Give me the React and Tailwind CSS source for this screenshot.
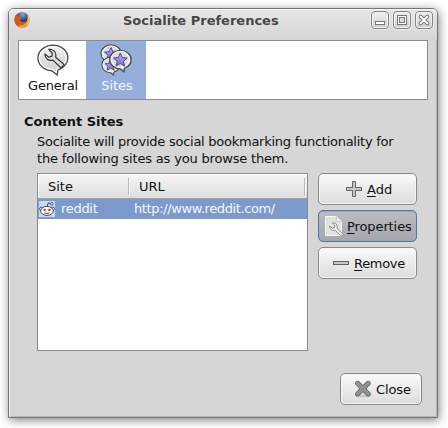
import React from 'react';

const STAR = 'M0 -5.6 L1.6 -1.9 L5.5 -1.6 L2.5 1 L3.5 4.9 L0 2.8 L-3.5 4.9 L-2.5 1 L-5.5 -1.6 L-1.6 -1.9 Z';

function FirefoxIcon() {
  return (
    <svg width="16" height="16" viewBox="0 0 16 16">
      <defs>
        <linearGradient id="fox" x1="0" y1="0" x2="1" y2="1">
          <stop offset="0" stopColor="#a93c1c" />
          <stop offset="0.5" stopColor="#d8581c" />
          <stop offset="1" stopColor="#e88a28" />
        </linearGradient>
        <radialGradient id="globe" cx="0.5" cy="0.15" r="0.8">
          <stop offset="0" stopColor="#7fb0dc" />
          <stop offset="0.6" stopColor="#2a5c9e" />
          <stop offset="1" stopColor="#152c5c" />
        </radialGradient>
      </defs>
      <circle cx="8" cy="8" r="7.7" fill="url(#fox)" />
      <circle cx="8.6" cy="5.8" r="5.3" fill="url(#globe)" />
      <path d="M1 4 L2.6 2.2 L3.2 4 C5 3.8 6 5 8 5.5 C8.4 6.8 6.3 7 6.5 8 C7 10 9 10.6 11.4 9 C10.5 13 5 13.4 2 10 Z" fill="#d05a1c" />
      <path d="M13.6 3.2 C16 6 15.6 11 12.4 13.6 C9 16 5.6 15.4 3.6 13.6 C8 14.4 11.6 12.4 13 9 C13.6 7 13.9 5 13.6 3.2 Z" fill="#f2a030" />
      <path d="M14.3 4.5 C15.6 7 15 11 12.5 13" fill="none" stroke="#fbd65a" strokeWidth="1" />
    </svg>
  );
}

function WrenchBubble() {
  return (
    <svg width="32" height="32" viewBox="0 0 32 32">
      <defs>
        <linearGradient id="bub" x1="0" y1="0" x2="0" y2="1">
          <stop offset="0" stopColor="#f0f0f0" />
          <stop offset="1" stopColor="#cdcfcb" />
        </linearGradient>
      </defs>
      <path d="M16 1.2 C24.2 1.2 30.8 6.8 30.8 13.9 C30.8 19.4 26.4 24 20.9 25.9 L20.2 31 L14.8 26.7 C7 26.2 1 20.8 1 13.9 C1 6.8 7.8 1.2 16 1.2 Z" fill="url(#bub)" stroke="#4c4e4b" strokeWidth="1.4" />
      <path d="M16 2.6 C23.4 2.6 29.4 7.4 29.4 13.9 C29.4 19 25 23.2 19.8 24.8 L19.3 28.5 L15.2 25.2 C8 25 2.4 20.2 2.4 13.9 C2.4 7.4 8.6 2.6 16 2.6 Z" fill="none" stroke="#fff" strokeWidth="1.1" />
      <path d="M11.8 5.3 C15.6 4.8 18.9 7.4 18.9 11 L18.7 13.2 L27 20.4 C26.4 22 25.2 23.2 23.8 23.8 L15.9 16.1 C11.8 17.2 8 15 7.8 10 L12 13.2 L15 12.1 L15.2 9 Z" fill="#dcdddb" stroke="#353735" strokeWidth="1.2" strokeLinejoin="round" />
    </svg>
  );
}

function Bubble({ transform }) {
  return (
    <g transform={transform}>
      <path d="M0 -9.6 C6 -9.6 10.8 -5.7 10.8 -0.5 C10.8 3.8 7.8 6.9 4.2 8.2 L3.6 11.8 L-0.4 8.8 C-6.2 8.7 -10.6 4.8 -10.6 -0.5 C-10.6 -5.7 -6 -9.6 0 -9.6 Z" fill="#dedfe1" stroke="#4b4d55" strokeWidth="1.4" />
      <ellipse cx="0" cy="-0.5" rx="9.2" ry="8.1" fill="none" stroke="#fff" strokeWidth="1" />
      <path d={STAR} transform="scale(1.25)" fill="url(#star)" stroke="#4a4688" strokeWidth="0.8" strokeLinejoin="round" />
    </g>
  );
}

function StarBubbles() {
  return (
    <svg width="32" height="32" viewBox="0 0 32 32">
      <defs>
        <linearGradient id="star" x1="0" y1="0" x2="0" y2="1">
          <stop offset="0" stopColor="#b9b0f6" />
          <stop offset="1" stopColor="#7a6fd6" />
        </linearGradient>
      </defs>
      <Bubble transform="translate(11 10) scale(0.94)" />
      <Bubble transform="translate(10.6 21.3) scale(0.82)" />
      <Bubble transform="translate(20.3 16)" />
    </svg>
  );
}

function RedditIcon() {
  return (
    <svg width="16" height="16" viewBox="0 0 16 16" className="shrink-0">
      <rect width="16" height="16" fill="#c4def8" />
      <path d="M8 6 L9.2 2 L12 2.6" fill="none" stroke="#444" strokeWidth="1" />
      <circle cx="12.8" cy="2.8" r="1.4" fill="#eee" stroke="#444" strokeWidth="0.9" />
      <circle cx="2.2" cy="7.8" r="1.6" fill="#fff" stroke="#444" strokeWidth="0.9" />
      <circle cx="13.8" cy="7.8" r="1.6" fill="#fff" stroke="#444" strokeWidth="0.9" />
      <ellipse cx="8" cy="9.9" rx="6.3" ry="4.5" fill="#fff" stroke="#444" strokeWidth="1" />
      <circle cx="5.6" cy="9" r="1.25" fill="#f02c1c" />
      <circle cx="10.4" cy="9" r="1.25" fill="#f02c1c" />
      <path d="M5.2 11.8 Q8 13.6 10.8 11.8" fill="none" stroke="#444" strokeWidth="0.9" />
    </svg>
  );
}

function PlusIcon() {
  return (
    <svg width="16" height="16" viewBox="0 0 16 16">
      <path d="M6.5 0.5 H9.5 V6.5 H15.5 V9.5 H9.5 V15.5 H6.5 V9.5 H0.5 V6.5 H6.5 Z" fill="#c8c9c5" stroke="#62645f" />
    </svg>
  );
}

function MinusIcon() {
  return (
    <svg width="16" height="16" viewBox="0 0 16 16">
      <rect x="0.5" y="6.5" width="15" height="3" fill="#c8c9c5" stroke="#62645f" />
    </svg>
  );
}

function PropertiesIcon() {
  return (
    <svg width="20" height="22" viewBox="0 0 20 22">
      <path d="M1.5 1.5 H12.5 L17.5 6.5 V20.5 H1.5 Z" fill="#e2e2e0" stroke="#f7f7f7" />
      <path d="M12 1.5 Q13.3 4 12.4 6.6 Q15.5 5.6 17.5 7 Z" fill="#fafafa" stroke="#b4b4b2" strokeWidth="0.6" />
      <path d="M8.4 8 C11 7.4 13.5 9.2 13.3 12.1 L13 13.2 L19.3 19.6 L17.6 21.3 L11.2 15.3 C8.6 16 6 14.8 5.6 11.2 L8.6 13.2 L10.8 12.4 L10.7 10.2 Z" fill="#f1f1ef" stroke="#80827d" strokeWidth="0.9" strokeLinejoin="round" />
    </svg>
  );
}

function CloseIcon() {
  return (
    <svg width="18" height="18" viewBox="0 0 18 18">
      <ellipse cx="9" cy="16" rx="8" ry="1.5" fill="#c9c9c9" />
      <path d="M3.6 3.3 L14.2 13.9 M14.2 3.3 L3.6 13.9" stroke="#5f5f5d" strokeWidth="5" strokeLinecap="round" />
      <path d="M3.6 3.3 L14.2 13.9 M14.2 3.3 L3.6 13.9" stroke="#a2a29f" strokeWidth="3.2" strokeLinecap="round" />
      <path d="M3.6 3.3 L14.2 13.9 M14.2 3.3 L3.6 13.9" stroke="#8b8b89" strokeWidth="1.6" strokeLinecap="round" />
    </svg>
  );
}

function WindowButton({ children }) {
  return (
    <div className="h-[18px] w-[18px] rounded-[4px] border border-[#858585] bg-gradient-to-b from-[#efefef] to-[#cfcfcf] shadow-[0_0_0_1px_#ebebeb,inset_0_0_0_1px_#f3f3f3]">
      <svg width="16" height="16" viewBox="0 0 16 16" className="block">{children}</svg>
    </div>
  );
}

const NORMAL = 'border-[#888a88] bg-gradient-to-b from-[#fafafa] to-[#dcdcdc] shadow-[inset_0_0_0_1px_#f5f5f5]';
const PRESSED = 'border-[#5674a6] bg-gradient-to-b from-[#babdc4] to-[#a3a6ad] shadow-[inset_0_1px_1px_#9da3b0]';

function Button({ icon, children, pressed = false, className = '' }) {
  return (
    <button className={`flex h-8 shrink-0 items-center rounded-[5px] border whitespace-nowrap ${pressed ? PRESSED : NORMAL} ${className}`}>
      {icon}
      <span>{children}</span>
    </button>
  );
}

function Key({ children }) {
  return <span className="underline decoration-1 underline-offset-2">{children}</span>;
}

export default function App() {
  return (
    <div className="h-[428px] w-[448px] overflow-hidden bg-white pt-2 pl-2 font-['DejaVu_Sans',sans-serif] text-[13px] leading-[17px] text-[#111]">
      <div className="flex h-[410px] w-[430px] flex-col rounded-t-[6px] border border-[#757575] bg-[#d6d6d6] shadow-[inset_1px_1px_0_#f4f4f4,inset_-1px_-1px_0_#b8b8b8,1px_2px_10px_rgba(0,0,0,0.5)]">
        <header className="flex h-[31px] shrink-0 rounded-t-[5px] bg-gradient-to-b from-[#e6e6e6] to-[#d6d6d6] pr-1 pl-[5px] shadow-[inset_0_1px_0_#f8f8f8]">
          <div className="pt-[3px]"><FirefoxIcon /></div>
          <h1 className="ml-[93px] flex-1 pt-[3px] font-bold whitespace-nowrap text-[#474747]">Socialite Preferences</h1>
          <div className="flex gap-1 pt-0.5">
            <WindowButton>
              <rect x="3.5" y="9.5" width="9" height="3" fill="#fff" stroke="#777" />
            </WindowButton>
            <WindowButton>
              <rect x="3.5" y="3.5" width="9" height="9" fill="#fff" stroke="#777" />
              <rect x="5.5" y="5.5" width="5" height="5" fill="#ddd" stroke="#777" />
            </WindowButton>
            <WindowButton>
              <path d="M4.6 4.6 L11.4 11.4 M11.4 4.6 L4.6 11.4" stroke="#777" strokeWidth="4" strokeLinecap="round" />
              <path d="M4.6 4.6 L11.4 11.4 M11.4 4.6 L4.6 11.4" stroke="#fff" strokeWidth="2" strokeLinecap="round" />
            </WindowButton>
          </div>
        </header>

        <nav className="mx-[9px] flex h-[60px] shrink-0 border border-[#8c8c8c] bg-white">
          <div className="flex w-[67px] flex-col items-center pt-[3px]">
            <WrenchBubble />
            <span className="mt-px pl-px tracking-[-0.2px]">General</span>
          </div>
          <div className="flex w-[60px] flex-col items-center bg-[#95afda] pt-[3px] text-[#f2f5fa]">
            <StarBubbles />
            <span className="mt-px pl-0.5">Sites</span>
          </div>
        </nav>

        <main className="flex flex-1 flex-col">
          <h2 className="mt-[13px] ml-[15px] font-bold">Content Sites</h2>
          <p className="mt-[3px] ml-7 whitespace-nowrap">
            <span className="block tracking-[-0.26px]">Socialite will provide social bookmarking functionality for</span>
            <span className="block tracking-[-0.18px]">the following sites as you browse them.</span>
          </p>
          <div className="mt-[6px] ml-7 flex gap-2.5">
            <div className="h-[178px] w-[271px] border border-[#8c8c8c] bg-white">
              <div className="flex h-[25px] items-center border-b border-[#a0a0a0] bg-gradient-to-b from-[#f5f5f5] to-[#dedede] shadow-[inset_1px_1px_0_#fff]">
                <span className="w-[90px] pl-2.5">Site</span>
                <span className="h-[17px] w-0.5 border-r border-l border-r-[#f8f8f8] border-l-[#b8b8b8]" />
                <span className="flex-1 pl-[9px]">URL</span>
                <span className="mr-px h-[17px] w-0.5 border-r border-l border-r-[#f8f8f8] border-l-[#b8b8b8]" />
              </div>
              <div className="flex h-5 items-center bg-[#7d9acd] pl-px text-[#f4f7fb]">
                <RedditIcon />
                <span className="w-[73px] pb-0.5 pl-[6px] tracking-[-0.3px]">reddit</span>
                <span className="pb-0.5 pl-[6px] tracking-[-0.38px]">http://www.reddit.com/</span>
              </div>
            </div>
            <div className="flex w-[99px] flex-col gap-[5px]">
              <Button icon={<PlusIcon />} className="gap-[5px] pl-[27px]"><Key>A</Key>dd</Button>
              <Button pressed icon={<PropertiesIcon />} className="gap-[3px] pl-[5px] tracking-[-0.1px]"><Key>P</Key>roperties</Button>
              <Button icon={<MinusIcon />} className="gap-[5px] pl-[14px] tracking-[-0.3px]"><Key>R</Key>emove</Button>
            </div>
          </div>
          <div className="mt-[22px] mr-[15px] flex justify-end">
            <Button icon={<CloseIcon />} className="w-[82px] gap-[4px] pl-[13px] tracking-[-0.1px]">Close</Button>
          </div>
        </main>
      </div>
    </div>
  );
}
